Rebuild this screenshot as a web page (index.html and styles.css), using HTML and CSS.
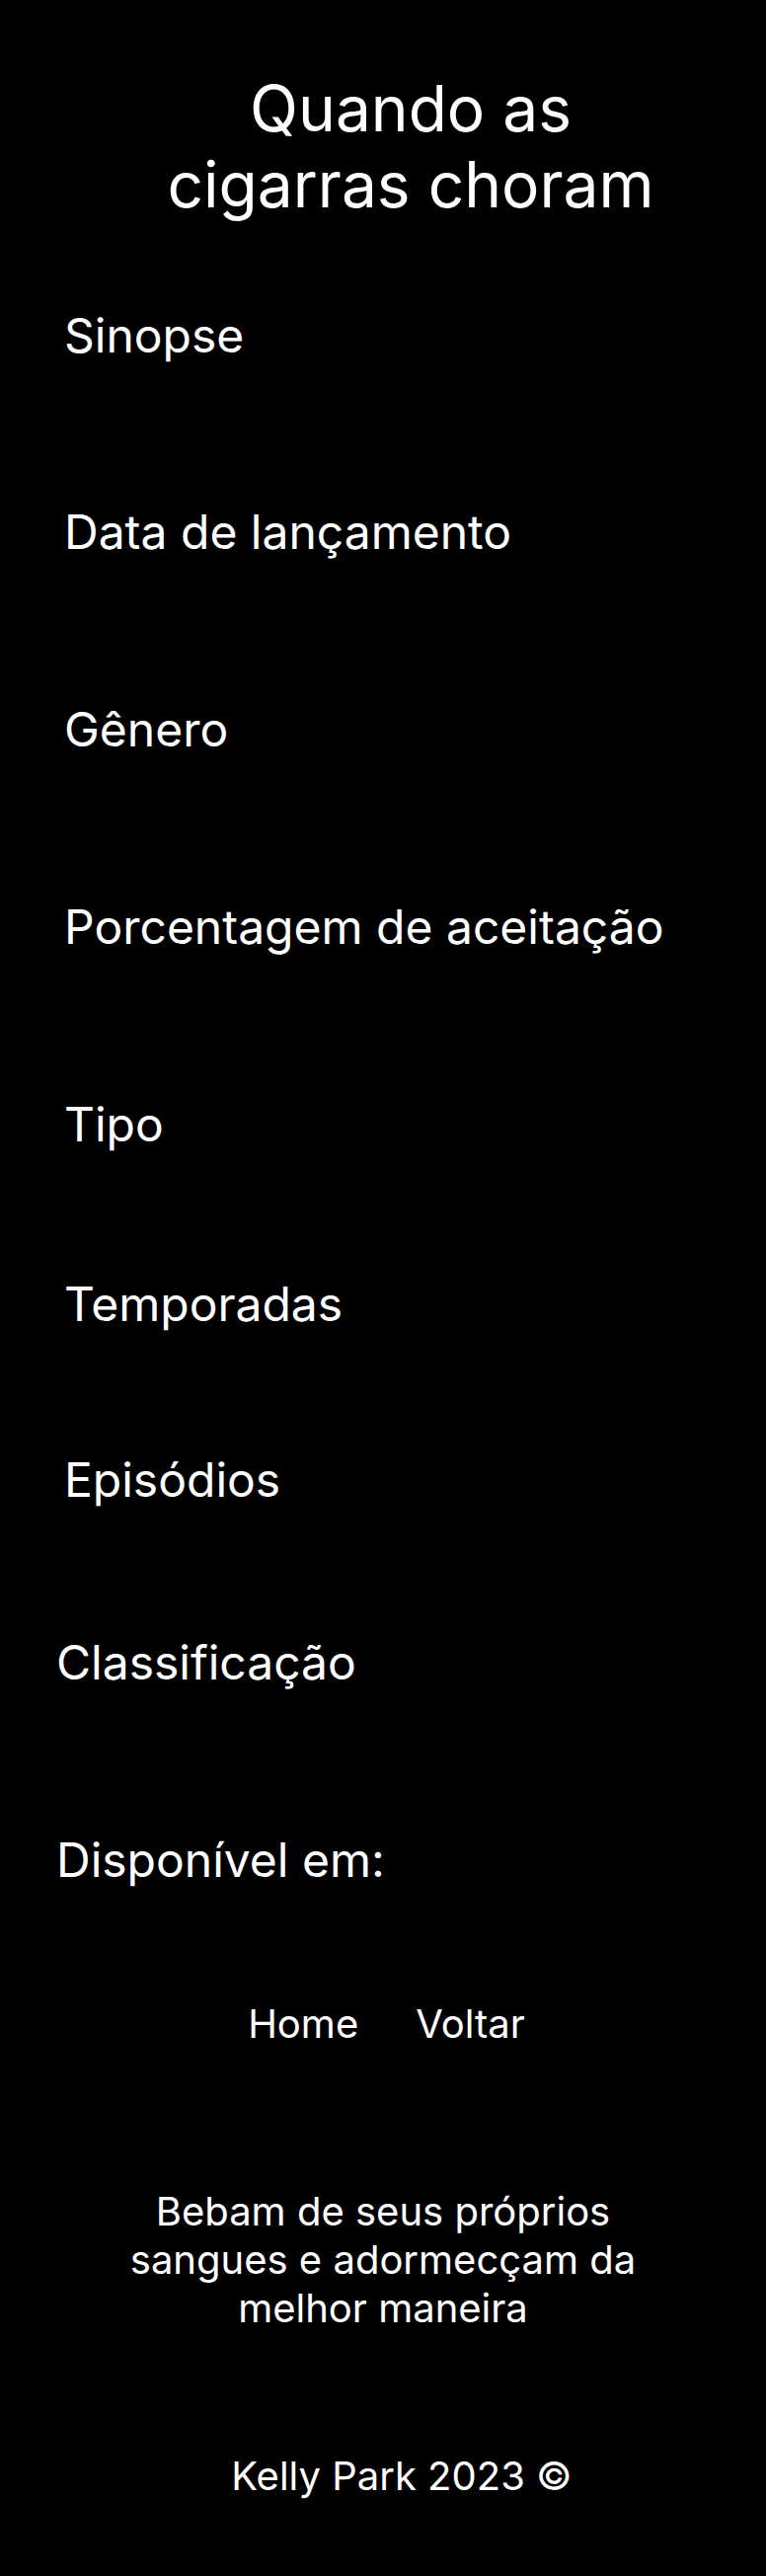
FILE: index.html
```html
<!DOCTYPE html>
<html lang="pt-BR">
<head>
<meta charset="utf-8">
<title>Quando as cigarras choram</title>
<link rel="stylesheet" href="styles.css">
</head>
<body>
<main class="page">
  <h1 class="title">Quando as<br>cigarras choram</h1>
  <section class="info">
    <h2 class="label label-sinopse">Sinopse</h2>
    <h2 class="label label-data">Data de lançamento</h2>
    <h2 class="label label-genero">Gênero</h2>
    <h2 class="label label-porcentagem">Porcentagem de aceitação</h2>
    <h2 class="label label-tipo">Tipo</h2>
    <h2 class="label label-temporadas">Temporadas</h2>
    <h2 class="label label-episodios">Episódios</h2>
    <h2 class="label label-alt label-classificacao">Classificação</h2>
    <h2 class="label label-alt label-disponivel">Disponível em:</h2>
  </section>
  <nav class="nav">
    <a class="nav-link" href="#">Home</a>
    <a class="nav-link" href="#">Voltar</a>
  </nav>
  <p class="quote">Bebam de seus próprios sangues e adormecçam da melhor maneira</p>
  <footer class="footer">Kelly Park 2023 ©</footer>
</main>
</body>
</html>
```
FILE: styles.css
```css
html, body {
  margin: 0;
  padding: 0;
  background: #000;
}
body {
  font-family: Inter, "Noto Sans", sans-serif;
  color: #fff;
  height: 2609px;
}
.page {
  display: flex;
  flex-direction: column;
}
.title {
  margin: 71px 0 0 0;
  padding-left: 56px;
  font-size: 64px;
  font-weight: 400;
  line-height: normal;
  text-align: center;
}
.info {
  display: flex;
  flex-direction: column;
}
.label {
  margin: 141px 0 0 0;
  padding-left: 65px;
  font-size: 48px;
  font-weight: 400;
  line-height: normal;
}
.label-sinopse { margin-top: 85px; }
.label-data { margin-top: 140px; }
.label-temporadas { margin-top: 123px; }
.label-episodios { margin-top: 119px; }
.label-classificacao { margin-top: 126px; }
.label-alt { padding-left: 57px; }
.nav {
  display: flex;
  justify-content: center;
  gap: 58px;
  margin-top: 112px;
  padding-left: 7px;
}
.nav-link {
  color: #fff;
  text-decoration: none;
  font-size: 40px;
  line-height: normal;
}
.quote {
  margin: 141px auto 0 auto;
  width: 520px;
  font-size: 40px;
  line-height: normal;
  text-align: center;
}
.footer {
  margin-top: 121px;
  padding-left: 38px;
  font-size: 40px;
  line-height: normal;
  text-align: center;
}
```
